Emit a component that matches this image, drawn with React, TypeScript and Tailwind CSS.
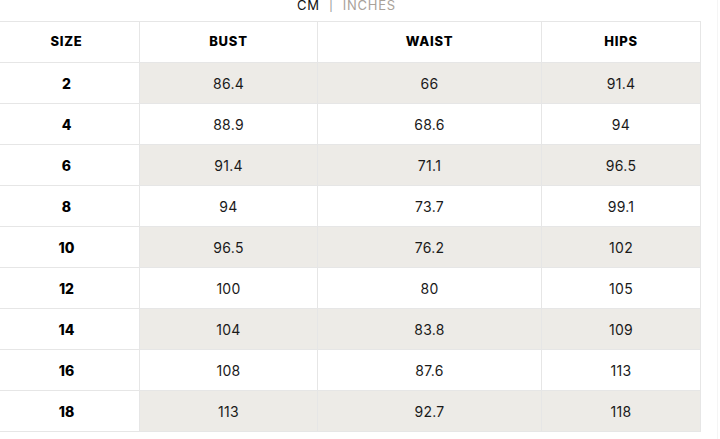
import React from 'react';

const rows: [string, string, string, string][] = [
  ['2', '86.4', '66', '91.4'],
  ['4', '88.9', '68.6', '94'],
  ['6', '91.4', '71.1', '96.5'],
  ['8', '94', '73.7', '99.1'],
  ['10', '96.5', '76.2', '102'],
  ['12', '100', '80', '105'],
  ['14', '104', '83.8', '109'],
  ['16', '108', '87.6', '113'],
  ['18', '113', '92.7', '118'],
];

export default function App() {
  return (
    <div className="w-[720px] h-[439px] overflow-hidden bg-white relative font-['Inter',sans-serif] text-[#111]">
      {/* faint scroll edge */}
      <div className="absolute right-0 top-0 bottom-0 w-[3px] border-l border-[#f5f5f5]" />

      <div className="-ml-[7px] w-[707px]">
        <div className="h-[21px] flex items-start justify-center">
          <div className="-mt-[3px] flex items-center gap-[9px] text-[13px] leading-[16px] tracking-[0.06em]">
            <span className="text-[#111]">CM</span>
            <span className="text-[#999] text-[12px]">|</span>
            <span className="text-[#a9a29a]">INCHES</span>
          </div>
        </div>

        <table className="w-full border-collapse table-fixed">
          <colgroup>
            <col className="w-[146px]" />
            <col className="w-[178px]" />
            <col className="w-[224px]" />
            <col className="w-[159px]" />
          </colgroup>
          <thead>
            <tr className="h-[41px]">
              {['SIZE', 'BUST', 'WAIST', 'HIPS'].map((h) => (
                <th
                  key={h}
                  className="border border-[#e6e6e6] text-[13px] font-extrabold tracking-[0.06em] text-black text-center"
                >
                  {h}
                </th>
              ))}
            </tr>
          </thead>
          <tbody>
            {rows.map((r, i) => {
              const shaded = i % 2 === 0;
              return (
                <tr key={r[0]} className="h-[41px]">
                  <td className="border border-[#e6e6e6] text-center text-[14px] font-extrabold text-black">
                    {r[0]}
                  </td>
                  {r.slice(1).map((v, j) => (
                    <td
                      key={j}
                      className={
                        'border border-[#e6e6e6] text-center text-[14px] tracking-[0.02em] text-[#1a1a1a] ' +
                        (shaded ? 'bg-[#edebe7]' : 'bg-white')
                      }
                    >
                      {v}
                    </td>
                  ))}
                </tr>
              );
            })}
          </tbody>
        </table>
      </div>
    </div>
  );
}
